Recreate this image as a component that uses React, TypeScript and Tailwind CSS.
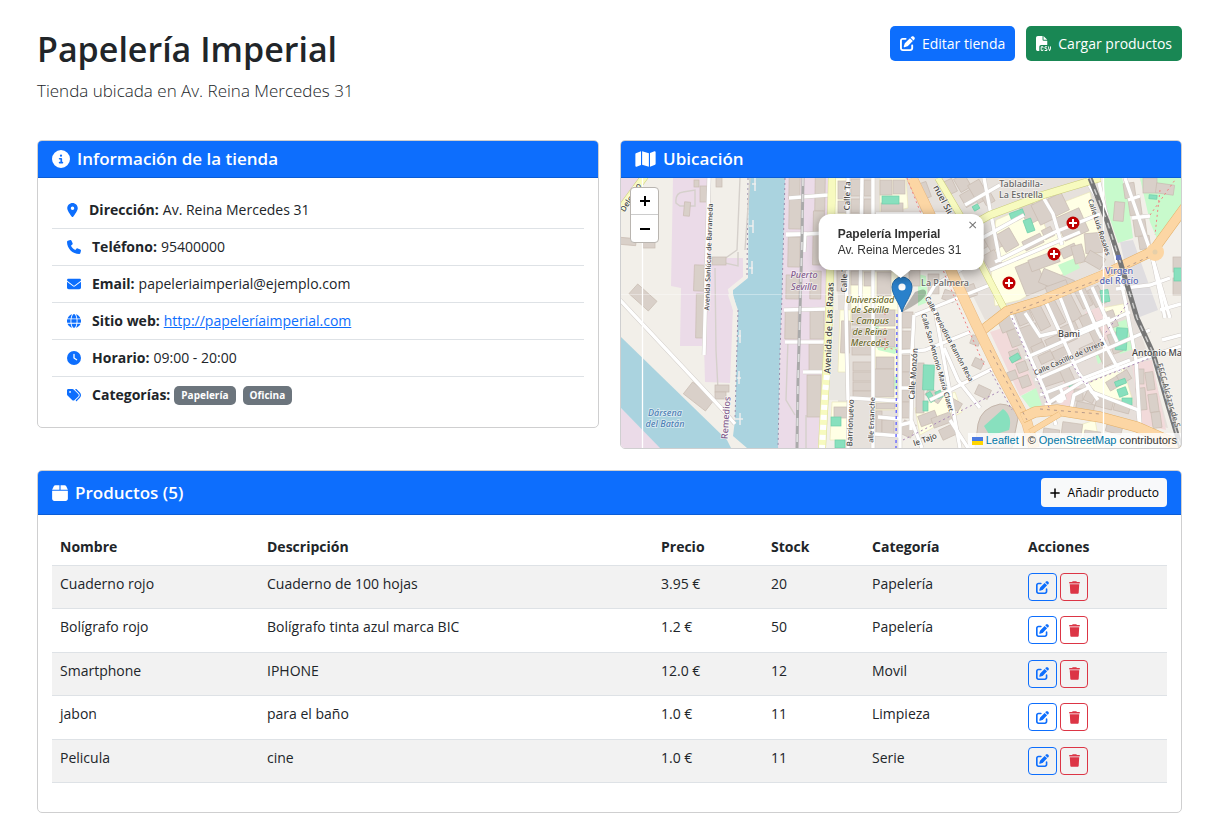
import React from "react";
import type { ReactNode } from "react";
import type { IconType } from "react-icons";
import {
  FaBox,
  FaCircleInfo,
  FaClock,
  FaEnvelope,
  FaFileCsv,
  FaGlobe,
  FaLocationDot,
  FaMap,
  FaPenToSquare,
  FaPhone,
  FaPlus,
  FaTags,
  FaTrash,
} from "react-icons/fa6";

type Product = {
  name: string;
  description: string;
  price: string;
  stock: number;
  category: string;
};

const products: Product[] = [
  { name: "Cuaderno rojo", description: "Cuaderno de 100 hojas", price: "3.95 €", stock: 20, category: "Papelería" },
  { name: "Bolígrafo rojo", description: "Bolígrafo tinta azul marca BIC", price: "1.2 €", stock: 50, category: "Papelería" },
  { name: "Smartphone", description: "IPHONE", price: "12.0 €", stock: 12, category: "Movil" },
  { name: "jabon", description: "para el baño", price: "1.0 €", stock: 11, category: "Limpieza" },
  { name: "Pelicula", description: "cine", price: "1.0 €", stock: 11, category: "Serie" },
];

// x, y, width, height, rotation in degrees
type Block = [number, number, number, number, number];

const buildings: Block[] = [
  [701, 187, 5, 14, 0], [695, 181, 3, 5, 0], [685, 203, 4, 12, 5], [713, 258, 12, 6, 0],
  [695, 266, 8, 24, 2], [697, 295, 6, 42, 1], [621, 239, 14, 5, 5], [644, 240, 10, 7, 0],
  [631, 292, 24, 11, 42], [686, 390, 26, 13, 38], [716, 386, 12, 5, 0], [716, 393, 9, 5, 0],
  [717, 178, 4, 8, 0], [790, 178, 9, 20, 1], [790, 200, 10, 28, 1], [789, 238, 10, 28, 1],
  [787, 276, 11, 22, 1], [786, 312, 11, 26, 1], [816, 178, 8, 32, 1], [814, 212, 9, 52, 1],
  [811, 272, 9, 26, 1], [811, 312, 12, 26, 0], [810, 345, 13, 27, 0], [808, 376, 12, 40, 0],
  [839, 182, 8, 16, 0], [839, 202, 7, 10, 0], [852, 180, 8, 15, 0], [852, 200, 9, 12, 0],
  [865, 181, 7, 14, 0], [865, 200, 6, 14, 0], [881, 181, 10, 13, 0], [894, 181, 10, 12, 0],
  [882, 204, 20, 9, 0], [838, 272, 8, 18, 0], [852, 272, 9, 12, 0], [865, 273, 7, 12, 0],
  [878, 273, 12, 22, 0], [842, 322, 7, 30, 2], [853, 312, 19, 12, 0], [853, 330, 18, 24, 0],
  [876, 311, 18, 14, 0], [877, 330, 17, 16, 0], [854, 363, 17, 7, 0], [854, 373, 17, 7, 0],
  [854, 383, 17, 7, 0], [854, 392, 17, 5, 0], [877, 358, 16, 10, 0], [875, 370, 18, 26, 0],
  [877, 404, 17, 4, 0], [877, 412, 4, 20, 0], [883, 421, 10, 12, 0], [835, 408, 11, 9, 0],
  [903, 313, 9, 14, 0], [903, 332, 9, 16, 0], [903, 356, 8, 15, 0], [903, 373, 8, 13, 0],
  [903, 391, 8, 10, 0], [903, 403, 8, 14, 0], [902, 423, 11, 12, 25], [917, 364, 6, 48, 0],
  [927, 392, 14, 7, 35], [920, 414, 16, 9, -20], [933, 416, 18, 8, -20], [941, 427, 16, 9, -25],
  [949, 401, 11, 7, 30], [974, 360, 8, 7, 25], [977, 388, 12, 8, 25], [972, 337, 7, 7, 20],
  [966, 286, 9, 10, -20], [944, 292, 10, 8, 20], [929, 275, 9, 18, 0], [910, 271, 9, 14, 0],
  [918, 184, 10, 14, -20], [921, 201, 8, 9, -20], [945, 181, 9, 12, -25], [956, 178, 13, 10, 60],
  [963, 192, 12, 12, 60], [973, 182, 11, 19, -30], [984, 194, 8, 9, -30], [963, 232, 9, 16, -28],
  [974, 234, 10, 15, -28], [987, 233, 12, 16, -30], [1001, 231, 13, 18, -30], [986, 253, 12, 14, -30],
  [1024, 205, 12, 17, -26], [1036, 202, 13, 20, -26], [1052, 196, 13, 17, -26], [1024, 238, 18, 8, -26],
  [1044, 229, 8, 8, -26], [1060, 213, 24, 23, -24], [1021, 263, 20, 29, -22], [1030, 256, 28, 10, -20],
  [1041, 275, 31, 13, 22], [1048, 284, 20, 13, -20], [1065, 244, 8, 14, 65], [1074, 246, 9, 16, -15],
  [1086, 234, 15, 18, -5], [1087, 255, 16, 10, 30], [1125, 184, 9, 13, -8], [1130, 199, 10, 15, -8],
  [1135, 220, 10, 15, -8], [1140, 237, 9, 11, -8], [1144, 179, 12, 13, 0], [1157, 185, 16, 8, 8],
  [1115, 203, 8, 17, 5], [1174, 258, 7, 13, 0], [1174, 279, 8, 15, 0],
  [1000, 315, 13, 15, -22], [1017, 308, 13, 15, -22], [1035, 303, 9, 26, -27], [1050, 299, 9, 26, -27],
  [1066, 292, 9, 28, -27], [1079, 288, 9, 19, -27], [1092, 288, 10, 17, -27], [1024, 326, 16, 28, -20],
  [1010, 330, 11, 15, -20], [1033, 345, 11, 7, -25], [1047, 338, 12, 8, -25], [1063, 333, 12, 8, -25],
  [1058, 326, 19, 9, -25], [1082, 315, 12, 12, -25], [1093, 330, 9, 13, -25], [1106, 312, 9, 15, -20],
  [1040, 354, 12, 7, -25], [1054, 350, 12, 8, -25], [1082, 346, 13, 11, -25], [1100, 344, 8, 21, -25],
  [1111, 334, 8, 18, -20], [1011, 351, 8, 9, -20], [1018, 363, 8, 8, -20], [1021, 377, 8, 9, -20],
  [1009, 372, 7, 7, -20], [1042, 373, 22, 10, -18], [1063, 365, 8, 20, -25], [1048, 391, 15, 9, -30],
  [1075, 390, 7, 10, 0], [1086, 392, 8, 9, 25], [1077, 404, 16, 8, 12], [1097, 399, 15, 8, 15],
  [1115, 403, 14, 8, 15], [1108, 379, 13, 8, -30], [1119, 373, 10, 8, -30], [1137, 370, 6, 13, 0],
  [1147, 373, 6, 16, -8], [1138, 389, 7, 20, -6], [1150, 395, 7, 16, -8], [1153, 413, 7, 14, -8],
  [1063, 424, 18, 10, 8], [1044, 430, 14, 10, 8], [1085, 432, 14, 9, 8], [1107, 426, 14, 6, 15],
];

const schoolGrounds = [
  "834,178 847,178 846,216 834,220", "880,178 906,178 908,208 880,214",
  "851,272 898,272 898,320 851,325", "875,310 897,310 897,410 875,410",
  "996,220 1035,203 1050,238 990,262", "1056,205 1090,192 1102,250 1020,300 995,306 990,262 1057,232",
  "840,310 851,310 848,372 838,372", "832,402 848,402 847,440 830,440",
  "915,408 955,392 962,412 920,435", "1088,384 1122,364 1133,402 1100,396", "1080,425 1095,420 1100,448 1060,448",
  "1102,308 1128,303 1125,312 1108,322", "1140,178 1168,178 1166,198 1145,192",
];

const greens: Block[] = [
  [1010, 211, 14, 7, -20], [1025, 219, 8, 13, -20], [882, 196, 17, 8, 0], [923, 365, 11, 25, 2],
  [928, 392, 5, 10, -30], [923, 401, 5, 10, 0], [936, 391, 6, 7, -25], [831, 417, 10, 9, 0],
  [835, 440, 10, 8, 0], [1012, 353, 6, 10, 60], [1116, 328, 11, 22, 4], [1115, 380, 11, 5, -20],
  [1118, 388, 9, 8, -20], [1122, 398, 10, 7, 0], [1069, 382, 4, 7, -20], [1101, 290, 8, 12, -10],
  [1174, 268, 8, 13, 0], [973, 205, 6, 5, -30], [1149, 195, 8, 4, 5],
];

const parks = [
  "1103,178 1122,178 1128,200 1133,238 1118,243 1107,210",
  "1140,178 1181,178 1181,205 1167,232 1158,241 1150,222",
  "918,274 926,276 928,302 918,306", "1058,265 1075,258 1080,268 1064,276",
  "1021,396 1036,388 1042,405 1031,409", "1110,325 1130,318 1136,348 1120,354",
  "870,311 878,311 880,340 898,348 895,354 878,350 868,320", "886,378 897,376 897,390 887,386",
  "1094,350 1101,347 1105,360 1098,364",
];

const whiteRoads = [
  "M620 300L723 410L735 424", "M709 178L705 318L704 355", "M848 178V265L846 308L848 400",
  "M862 178L860 310", "M873 178V448", "M900 240L900 448", "M876 214L950 214", "M850 398L900 401",
  "M849 400L848 448", "M900 352L925 350L970 332", "M914 315L912 352L911 430", "M900 388L912 388",
  "M915 315L990 285", "M935 310L960 448", "M944 348L958 380L980 408", "M930 400L1000 365",
  "M900 425L912 422L922 448", "M950 420L968 448", "M878 417L900 419", "M875 434L900 436",
  "M960 250L1024 215", "M963 268L935 285L926 300", "M965 205L1000 185", "M1000 262L984 178",
  "M1040 192L1053 214L1062 245", "M995 262L1055 232L1100 214", "M990 270L1080 232", "M1085 178L1107 215",
  "M1098 178L1125 300L1136 360L1140 426", "M1125 178L1150 250L1170 318", "M1128 200L1140 196",
  "M1132 218L1150 216", "M1010 312L1046 393L1056 425", "M1025 313L1040 336L1057 332",
  "M1045 300L1078 372L1098 400", "M1060 297L1074 333L1110 318", "M1080 290L1098 332L1120 372",
  "M1025 358L1130 312", "M1035 380L1150 330", "M1040 395L1130 360", "M1045 405L1080 383L1140 360L1181 346",
  "M1092 287L1117 342", "M1085 381L1092 392L1138 410L1140 430", "M1070 415L1074 395L1088 388",
  "M1116 289L1150 285L1170 278", "M1160 310L1181 304", "M1151 250L1165 318", "M1162 340L1181 335",
  "M1060 387L1065 400", "M786 234H805L804 252", "M789 198L828 195", "M786 235L827 233",
  "M784 310L826 309", "M785 342L825 342", "M803 372L824 372",
];

function MapLabel({ x, y, size = 9, rotate = 0, fill = "#444", italic = false, children }: {
  x: number; y: number; size?: number; rotate?: number; fill?: string; italic?: boolean; children: ReactNode;
}) {
  return (
    <text
      x={x} y={y} fontSize={size} fill={fill} textAnchor="middle" stroke="#fff" strokeOpacity="0.6" strokeWidth="1.5"
      paintOrder="stroke" fontWeight="500" fontStyle={italic ? "italic" : "normal"} transform={`rotate(${rotate} ${x} ${y})`}
    >
      {children}
    </text>
  );
}

function Blocks({ items, fill, stroke, grow = 0 }: { items: Block[]; fill: string; stroke: string; grow?: number }) {
  return (
    <g fill={fill} stroke={stroke} strokeWidth="0.7">
      {items.map(([x, y, w, h, a], i) => (
        <rect
          key={i} x={x - grow} y={y - grow} width={w + 2 * grow} height={h + 2 * grow}
          transform={`rotate(${a} ${x + w / 2} ${y + h / 2})`}
        />
      ))}
    </g>
  );
}

function Road({ d, color, edge, width }: { d: string; color: string; edge: string; width: number }) {
  return (
    <g fill="none" strokeLinejoin="round">
      <path d={d} stroke={edge} strokeWidth={width + 1} />
      <path d={d} stroke={color} strokeWidth={width} />
    </g>
  );
}

function CityMap() {
  const railway = "M1090 178L1107 221L1120 261L1137 318L1153 353L1168 405L1181 448";
  const dockRail = "M803 178L802 240L800 310L798 380L797 448";
  return (
    <svg
      className="absolute inset-0 size-full font-['Noto_Sans',sans-serif]"
      viewBox="621 178 560 270" preserveAspectRatio="xMidYMid slice" role="img" aria-label="Mapa"
    >
      <rect x="500" y="100" width="800" height="450" fill="#f2efe9" />
      <path d="M830 178H1095L1120 261L1008 315L985 320L960 270L905 272L900 448H838L838 300Z" fill="#e6e1dc" />
      <path d="M1000 318L1120 275L1150 360L1168 428L1040 408Z" fill="#e6dfda" />
      <path d="M673 178H709L711 258H743V278L728 295L733 310L730 383L705 382L704 346H680L681 288L671 286Z" fill="#ebdbe8" />
      <path d="M785 178H829L824 448H778L782 295Z" fill="#ebdbe8" />
      <path d="M620 407L661 448H620ZM620 178H640L620 208Z" fill="#ebdbe8" />
      <path d="M990 332L1008 326L1036 388L1020 396ZM1132 364L1152 360L1166 430L1140 424ZM1085 312L1106 305L1120 335L1098 343ZM1064 376L1080 385L1072 408H1060Z" fill="#f2dada" />
      <path d="M1120 242L1133 240L1158 310L1137 318Z" fill="#dfdde0" />
      <path d="M835 310L848 310V400H828Z" fill="#e9e7e2" />
      <path d="M748 178L747 278L733 288L733 296L738 310L735 420L733 436L747 448H778L780 353L782 295L785 178Z" fill="#aad3df" />
      <path d="M747 178L746 277L730 290L735 310L733 418L730 432" fill="none" stroke="#f2efe9" strokeWidth="4" />
      <path d="M620 336L727 440L731 448H660L620 407Z" fill="#aad3df" />
      <path d="M785 178L782 295L780 353L778 448M748 178L747 278M738 310L735 420" fill="none" stroke="#9a8cab" strokeWidth="1" strokeDasharray="2 3" />
      <path d="M752 184H756M755 178V191M749 226H753M753 220V233M749 268H753M752 261V274M738 336H741M740 330V343M737 378H741M739 371V384M735 419H743M740 413V425" fill="none" stroke="#eee" strokeWidth="1.5" />
      <g fill="#ffffe5" stroke="#e9e4b5" strokeWidth="0.6">
        {schoolGrounds.map((p) => <polygon key={p} points={p} />)}
      </g>
      <g fill="#c8facc">
        {parks.map((p) => <polygon key={p} points={p} />)}
      </g>
      <g fill="none" stroke="#d5d0cb" strokeWidth="1.4">
        <path d="M676 203Q675 193 683 192L695 190V206H680ZM740 178L737 250L720 262L738 266V252M715 268L716 350L718 390M750 178L745 250M788 340L786 400L795 415M806 415V448" />
      </g>
      <path d="M978 424Q981 408 1000 404Q1014 404 1018 418L1012 448H975Z" fill="#d9d0c9" stroke="#c4b6ab" />
      <path d="M984 426L1003 409Q1013 416 1009 430L990 436Z" fill="#88e0be" />
      <Blocks items={buildings} fill="#d9d0c9" stroke="#c9bcb2" grow={1} />
      <Blocks items={greens} fill="#88e0be" stroke="#6fcfa9" />
      <g fill="none" stroke="#d1ccc8" strokeWidth="4.4">
        {whiteRoads.map((d) => <path key={d} d={d} />)}
      </g>
      <g fill="none" stroke="#fff" strokeWidth="3.4">
        {whiteRoads.map((d) => <path key={d} d={d} />)}
      </g>
      <circle cx="1060" cy="399" r="4" fill="#fff" />
      <Road d="M620 210L645 176" color="#f7fabf" edge="#c9cb7c" width={7} />
      <Road d="M832 178L829 318L825 393L822 448" color="#f7fabf" edge="#d9dc9a" width={7} />
      <path d="M827 375L825 393L822 448" fill="none" stroke="#fff" strokeWidth="6" strokeDasharray="5 5" />
      <Road d="M938 178L960 215L983 268L1006 312" color="#f7fabf" edge="#c9cb7c" width={6} />
      <Road d="M965 229L990 215L1043 195L1100 178" color="#f7fabf" edge="#c9cb7c" width={7} />
      <Road d="M980 332L1007 311L1040 301L1103 275L1153 251L1190 200" color="#fcd6a4" edge="#e3b069" width={9} />
      <Road d="M912 178L930 215L953 275L975 322L1000 373L1027 423L1034 448" color="#fcd6a4" edge="#e8b984" width={10} />
      <Road d="M1022 418L1035 412L1057 410L1100 417L1137 427L1185 448" color="#fcd6a4" edge="#e3b069" width={10} />
      <Road d="M1030 432L1060 414" color="#fcd6a4" edge="#e3b069" width={5} />
      <circle cx="1155" cy="252" r="9" fill="#fcd6a4" />
      <circle cx="1155" cy="252" r="2.5" fill="#e6cfa9" />
      <g fill="none" stroke="#b79a8a" strokeWidth="1" strokeDasharray="3 4">
        <path d="M1010 313L1103 278L1148 257M990 350L1027 420M1040 409L1100 414" />
      </g>
      <g fill="none" stroke="#a786b5" strokeWidth="1" strokeDasharray="2 3">
        <path d="M903 440L1000 391M990 370L1012 410M1012 318L1050 410M1072 364L1085 384L1150 358M1128 303L1100 340" />
      </g>
      <path d="M897 314L896 448" fill="none" stroke="#6868ff" strokeWidth="1.4" strokeDasharray="3 3" />
      <path d="M885 313V352M876 345L897 350M907 178L947 280L984 365M1160 190L1155 235M1150 215L1175 180" fill="none" stroke="#f08080" strokeWidth="1" strokeDasharray="2 3" />
      <path d={dockRail} fill="none" stroke="#aaa" strokeWidth="3" />
      <path d={dockRail} fill="none" stroke="#ddd" strokeWidth="1.8" strokeDasharray="8 8" />
      <path d={railway} fill="none" stroke="#777" strokeWidth="5" />
      <path d={railway} fill="none" stroke="#ccc" strokeWidth="1.4" strokeDasharray="6 6" />
      <path d="M642.5 178V448M1103.5 178V448M872.5 178V448" stroke="#fff" strokeWidth="1.3" />
      <path d="M621 294.5H1181" stroke="#fff" strokeOpacity="0.35" strokeWidth="1" />
      {[[1073, 223], [1054, 254], [1009, 283]].map(([x, y]) => (
        <g key={x}>
          <circle cx={x} cy={y} r="6.5" fill="#bf0000" />
          <path d={`M${x - 4} ${y}H${x + 4}M${x} ${y - 4}V${y + 4}`} stroke="#fff" strokeWidth="2" />
        </g>
      ))}
      <rect x="1116" y="255" width="5" height="5" fill="#6373ba" />
      <MapLabel x={711} y={257} size={7} rotate={-88}>Avenida Sanlúcar de Barrameda</MapLabel>
      <MapLabel x={633} y={199} size={8} rotate={-58}>Delgado</MapLabel>
      <MapLabel x={804} y={278} fill="#85608f" italic>Puerto</MapLabel>
      <MapLabel x={804} y={290} fill="#85608f" italic>Sevilla</MapLabel>
      <MapLabel x={832} y={328} size={9} rotate={-88}>Avenida de Las Razas</MapLabel>
      <MapLabel x={850} y={196} size={8} rotate={-88}>Calle Ta</MapLabel>
      <MapLabel x={847} y={280} size={8} rotate={-88}>Calle T</MapLabel>
      <MapLabel x={870} y={303} size={9} fill="#6b6a2b" italic>Universidad</MapLabel>
      <MapLabel x={870} y={313} size={9} fill="#6b6a2b" italic>de Sevilla</MapLabel>
      <MapLabel x={870} y={324} size={9} fill="#6b6a2b" italic>- Campus</MapLabel>
      <MapLabel x={870} y={335} size={9} fill="#6b6a2b" italic>de Reina</MapLabel>
      <MapLabel x={870} y={346} size={9} fill="#6b6a2b" italic>Mercedes</MapLabel>
      <MapLabel x={945} y={286} fill="#666">La Palmera</MapLabel>
      <MapLabel x={916} y={374} size={8} rotate={-86}>Calle Monzón</MapLabel>
      <MapLabel x={935} y={363} size={7} rotate={74}>Calle San Antonio María Claret</MapLabel>
      <MapLabel x={947} y={340} size={7} rotate={62}>Calle Periodista Ramón Resa</MapLabel>
      <MapLabel x={853} y={423} size={8} rotate={-88}>Barrionuevo</MapLabel>
      <MapLabel x={874} y={420} size={7} rotate={-88}>alle Ensanche</MapLabel>
      <MapLabel x={926} y={442} size={8} rotate={-20}>le Tajo</MapLabel>
      <MapLabel x={944} y={208} size={9} rotate={62}>nuel Siurot</MapLabel>
      <MapLabel x={1021} y={187} fill="#666">Tabladilla-</MapLabel>
      <MapLabel x={1021} y={198} fill="#666">La Estrella</MapLabel>
      <MapLabel x={1097} y={228} size={7} rotate={72}>Calle Luis Rosales</MapLabel>
      <MapLabel x={1119} y={274} fill="#5567b5">Virgen</MapLabel>
      <MapLabel x={1119} y={284} fill="#5567b5">del Rocío</MapLabel>
      <MapLabel x={1069} y={337}>Bami</MapLabel>
      <MapLabel x={1070} y={360} size={7} rotate={-24}>Calle Castillo de Utrera</MapLabel>
      <MapLabel x={1157} y={356}>Antonio Ma</MapLabel>
      <MapLabel x={1166} y={396} size={8} rotate={74} fill="#666">FFCC Alcázar de S</MapLabel>
      <MapLabel x={665} y={416} fill="#4e80b5" italic>Dársena</MapLabel>
      <MapLabel x={665} y={427} fill="#4e80b5" italic>del Batán</MapLabel>
      <MapLabel x={729} y={418} rotate={-86} fill="#85608f">Remedios</MapLabel>
    </svg>
  );
}

function StoreMap() {
  return (
    <div className="relative h-[270px] overflow-hidden rounded-b font-['Liberation_Sans',sans-serif]">
      <CityMap />
      <div className="absolute top-[9px] left-[9px] flex flex-col overflow-hidden rounded-sm border border-[#b9b5b0] bg-white text-black">
        <button type="button" aria-label="Acercar" className="flex h-[27px] w-[27px] items-center justify-center border-b border-[#ccc]">
          <svg viewBox="0 0 12 12" className="size-3" aria-hidden="true"><path d="M6 1V11M1 6H11" stroke="currentColor" strokeWidth="2" /></svg>
        </button>
        <button type="button" aria-label="Alejar" className="flex h-[27px] w-[27px] items-center justify-center">
          <svg viewBox="0 0 12 12" className="size-3" aria-hidden="true"><path d="M1 6H11" stroke="currentColor" strokeWidth="2" /></svg>
        </button>
      </div>
      <svg viewBox="0 0 36 38" className="absolute top-[98px] left-1/2 h-[38px] w-9 -translate-x-[10px]" aria-hidden="true">
        <path d="M11 36L24 16Q36 10 35 18Q33 25 11 36Z" fill="#000" fillOpacity="0.25" />
        <path d="M11 36C9 28 1 19 1 11A10 10 0 0 1 21 11C21 19 13 28 11 36Z" fill="#2a81cb" stroke="#2268a5" />
        <circle cx="11" cy="11" r="3.6" fill="#fff" />
      </svg>
      <div className="absolute top-9 left-1/2 -translate-x-1/2 drop-shadow-[0_3px_6px_rgba(0,0,0,0.4)]">
        <div className="relative rounded-xl bg-white py-3 pr-[22px] pl-[19px] text-[12px] leading-4 whitespace-nowrap text-[#333]">
          <strong className="block font-bold">Papelería Imperial</strong>
          Av. Reina Mercedes 31
          <button type="button" aria-label="Cerrar" className="absolute top-0 right-0 flex size-[22px] items-center justify-center text-[#757575]">
            <svg viewBox="0 0 10 10" className="size-2" aria-hidden="true"><path d="M1 1L9 9M9 1L1 9" stroke="currentColor" strokeWidth="1.3" /></svg>
          </button>
        </div>
        <svg viewBox="0 0 20 8" className="mx-auto h-2 w-5" aria-hidden="true"><path d="M0 0H20L10 8Z" fill="#fff" /></svg>
      </div>
      <div className="absolute right-0 bottom-0 flex items-center gap-[3px] bg-white/80 px-1 text-[11px] leading-[15px] text-[#333]">
        <a href="#leaflet" className="flex items-center gap-[3px] text-[#0078a8]">
          <svg viewBox="0 0 11 8" className="h-2 w-[11px]" aria-hidden="true">
            <path d="M0 0H11V4H0Z" fill="#4c7be1" /><path d="M0 4H11V8H0Z" fill="#ffd500" />
          </svg>
          Leaflet
        </a>
        <span>| © <a href="#osm" className="text-[#0078a8]">OpenStreetMap</a> contributors</span>
      </div>
    </div>
  );
}

function InfoRow({ icon: Icon, iconWidth = "w-[14px]", label, children }: {
  icon: IconType; iconWidth?: string; label: string; children: ReactNode;
}) {
  return (
    <li className="flex items-center border-b border-[#dee2e6] px-[15px] py-[7px] leading-[22px] last:border-b-0">
      <Icon className={`mr-[11px] h-[14px] shrink-0 text-[#0d6efd] ${iconWidth}`} aria-hidden="true" />
      <strong className="mr-1 font-bold">{label}</strong>
      {children}
    </li>
  );
}

function Badge({ children }: { children: ReactNode }) {
  return <span className="mr-[7px] rounded-[5px] bg-[#6c757d] px-[7px] py-px text-[10px] leading-[17px] font-bold text-white">{children}</span>;
}

const card = "rounded-[5px] border border-[#cfcfd0] bg-white";
const cardHeader = "flex items-center rounded-t bg-[#0d6efd] border-b border-[#0b5dd6] px-[14px] text-white";
const cardTitle = "flex items-center gap-[7px] text-[17px] leading-[22px] font-semibold";

export default function App() {
  return (
    <main className="pt-[26px] pr-6 pb-3 pl-[37px] font-['Open_Sans','Noto_Sans',sans-serif] text-[14px] text-[#212529]">
      <header className="flex items-start justify-between">
        <div>
          <h1 className="text-[34px] leading-[46px] font-semibold">Papelería Imperial</h1>
          <p className="mt-[5px] text-[17px] leading-[27px] font-light">Tienda ubicada en Av. Reina Mercedes 31</p>
        </div>
        <div className="flex gap-[11px] text-white">
          <button type="button" className="flex h-[35px] items-center gap-[7px] rounded-[5px] bg-[#0d6efd] px-[10px]">
            <FaPenToSquare className="size-[15px]" aria-hidden="true" />
            Editar tienda
          </button>
          <button type="button" className="flex h-[35px] items-center gap-[7px] rounded-[5px] bg-[#198754] px-[10px]">
            <FaFileCsv className="size-[15px]" aria-hidden="true" />
            Cargar productos
          </button>
        </div>
      </header>

      <div className="mt-9 grid grid-cols-2 items-start gap-[21px]">
        <section className={card}>
          <div className={`${cardHeader} h-[37px]`}>
            <h2 className={cardTitle}><FaCircleInfo className="size-[18px]" aria-hidden="true" />Información de la tienda</h2>
          </div>
          <ul className="p-[14px]">
            <InfoRow icon={FaLocationDot} iconWidth="w-[11px]" label="Dirección:">Av. Reina Mercedes 31</InfoRow>
            <InfoRow icon={FaPhone} label="Teléfono:">95400000</InfoRow>
            <InfoRow icon={FaEnvelope} label="Email:">papeleriaimperial@ejemplo.com</InfoRow>
            <InfoRow icon={FaGlobe} label="Sitio web:">
              <a href="#web" className="text-[#0d6efd] underline">http://papeleríaimperial.com</a>
            </InfoRow>
            <InfoRow icon={FaClock} label="Horario:">09:00 - 20:00</InfoRow>
            <InfoRow icon={FaTags} label="Categorías:"><Badge>Papelería</Badge><Badge>Oficina</Badge></InfoRow>
          </ul>
        </section>

        <section className={card}>
          <div className={`${cardHeader} h-[37px]`}>
            <h2 className={cardTitle}><FaMap className="h-[18px] w-[21px]" aria-hidden="true" />Ubicación</h2>
          </div>
          <StoreMap />
        </section>
      </div>

      <section className={`${card} mt-[21px]`}>
        <div className={`${cardHeader} h-[44px] justify-between`}>
          <h2 className={cardTitle}><FaBox className="h-[18px] w-4" aria-hidden="true" />Productos (5)</h2>
          <button type="button" className="flex h-[29px] items-center gap-[7px] rounded-[4px] bg-[#f8f9fa] px-2 text-[12px] text-black">
            <FaPlus className="size-3" aria-hidden="true" />
            Añadir producto
          </button>
        </div>
        <div className="px-[14px] pt-[14px] pb-[29px]">
          <table className="h-[254px] w-full table-fixed border-collapse text-left leading-[22px]">
            <thead>
              <tr className="border-b border-[#dee2e6]">
                <th className="w-[207px] px-2 py-[7px] font-bold">Nombre</th>
                <th className="px-2 py-[7px] font-bold">Descripción</th>
                <th className="w-[110px] px-2 py-[7px] font-bold">Precio</th>
                <th className="w-[101px] px-2 py-[7px] font-bold">Stock</th>
                <th className="w-[156px] px-2 py-[7px] font-bold">Categoría</th>
                <th className="w-[147px] px-2 py-[7px] font-bold">Acciones</th>
              </tr>
            </thead>
            <tbody>
              {products.map((p) => (
                <tr key={p.name} className="border-b border-[#dee2e6] align-top odd:bg-[#f2f2f2]">
                  <td className="px-2 py-[7px]">{p.name}</td>
                  <td className="px-2 py-[7px]">{p.description}</td>
                  <td className="px-2 py-[7px]">{p.price}</td>
                  <td className="px-2 py-[7px]">{p.stock}</td>
                  <td className="px-2 py-[7px]">{p.category}</td>
                  <td className="px-2 py-[7px]">
                    <div className="flex gap-[3px]">
                      <button type="button" aria-label={`Editar ${p.name}`} className="flex h-7 w-[29px] items-center justify-center rounded-[4px] border border-[#0d6efd] text-[#0d6efd]">
                        <FaPenToSquare className="size-[13px]" aria-hidden="true" />
                      </button>
                      <button type="button" aria-label={`Eliminar ${p.name}`} className="flex size-7 items-center justify-center rounded-[4px] border border-[#dc3545] text-[#dc3545]">
                        <FaTrash className="h-[13px] w-[11px]" aria-hidden="true" />
                      </button>
                    </div>
                  </td>
                </tr>
              ))}
            </tbody>
          </table>
        </div>
      </section>
    </main>
  );
}
